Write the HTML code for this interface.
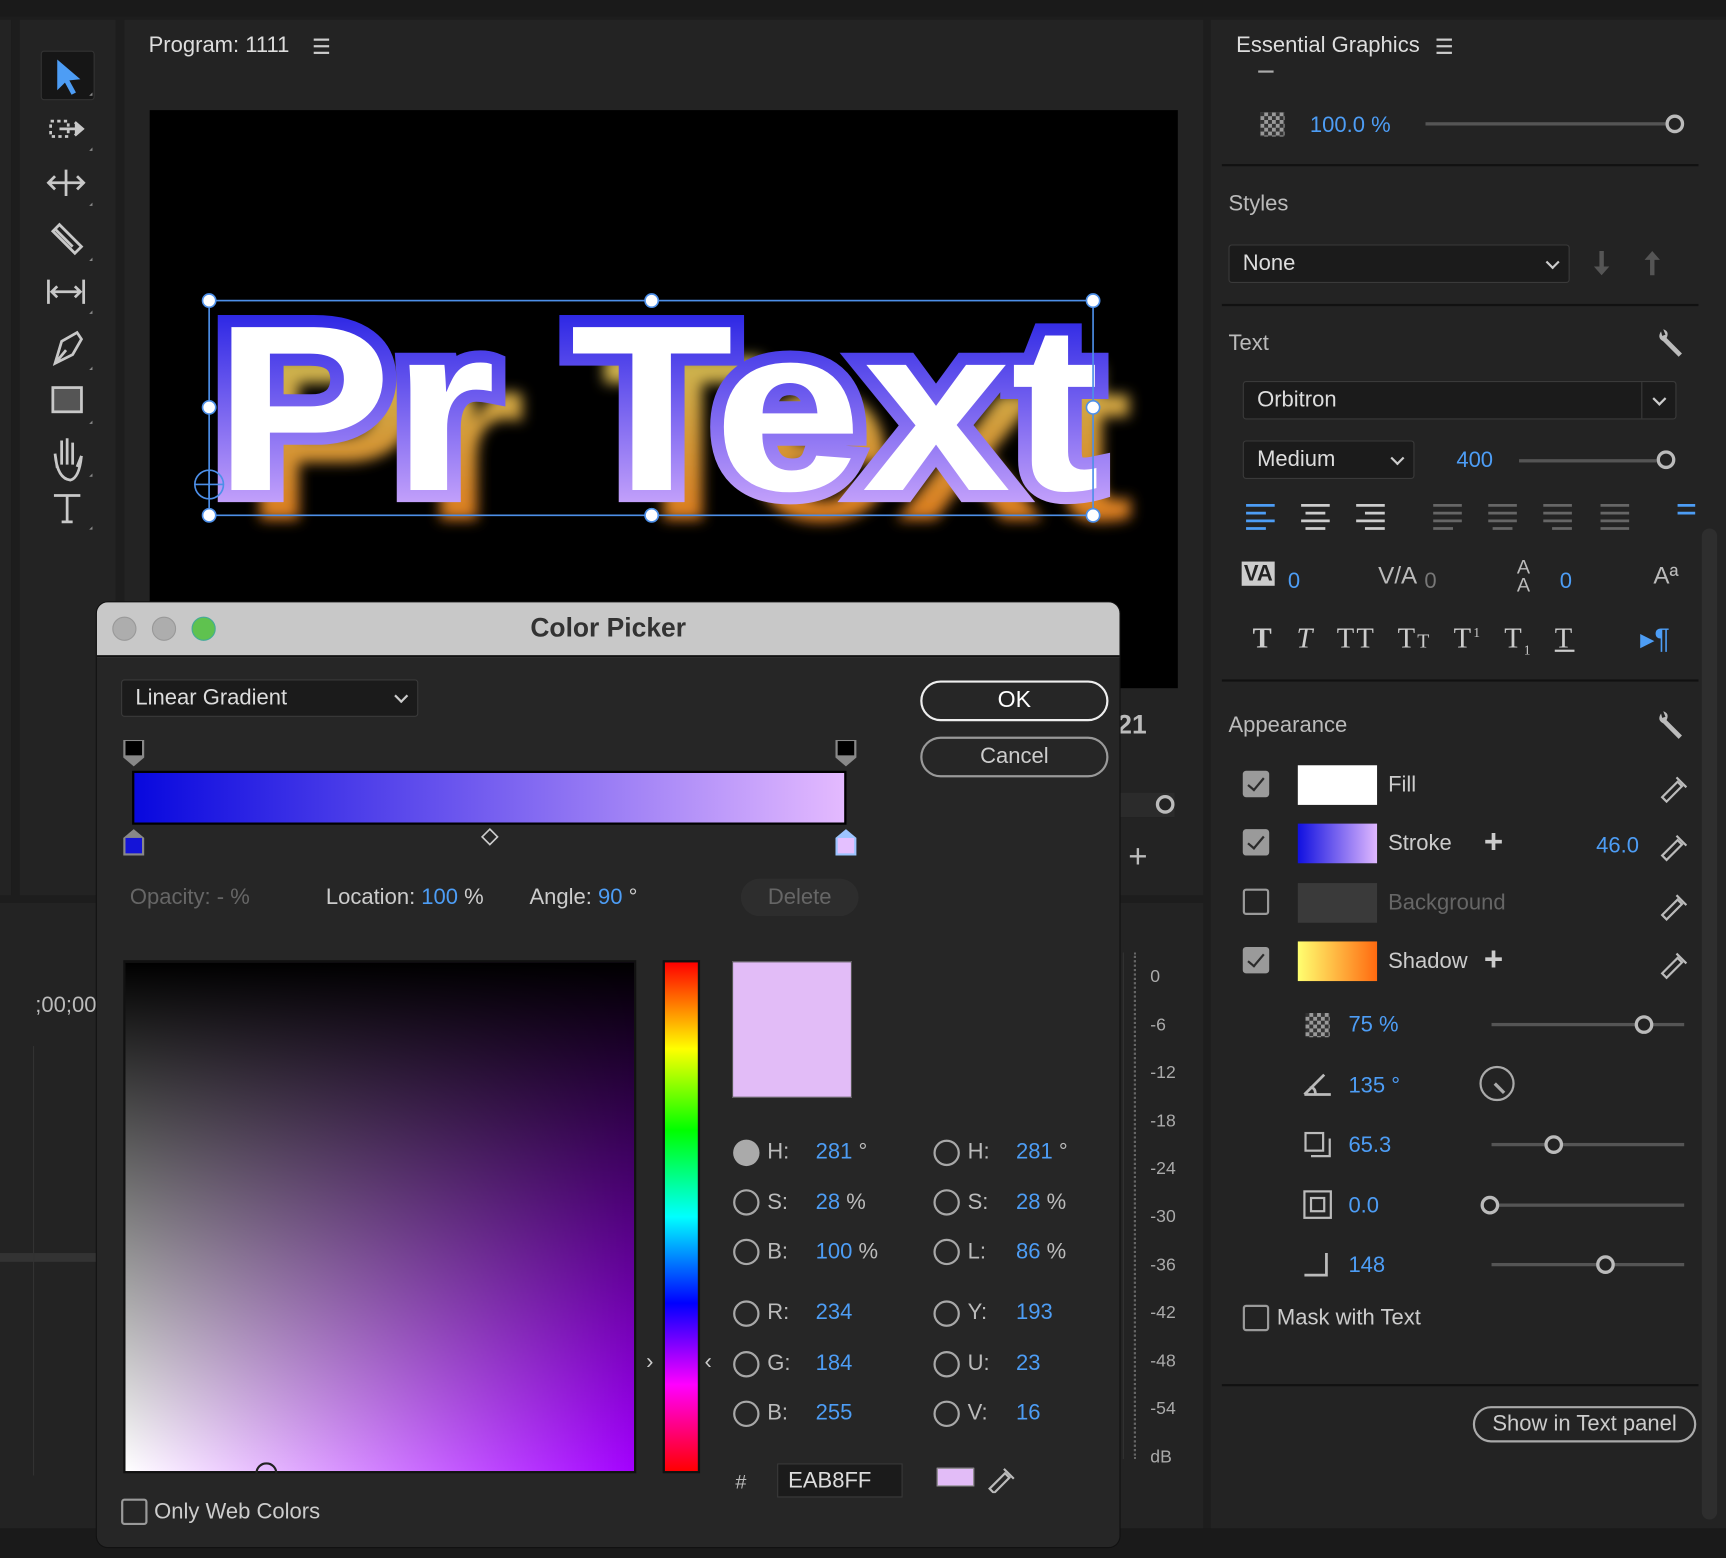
<!DOCTYPE html>
<html><head><meta charset="utf-8"><style>
*{margin:0;padding:0;box-sizing:border-box}
html,body{width:1726px;height:1558px;overflow:hidden;background:#1b1b1b}
#w{position:absolute;left:0;top:0;width:1568px;height:1415px;transform:scale(1.10077,1.1011);transform-origin:0 0;background:#1d1d1d;font-family:"Liberation Sans",sans-serif;color:#c9c9c9;font-size:20px}
.a{position:absolute}
.b{color:#4d9df5}
.sep{position:absolute;height:2px;background:#111;left:1110px;width:433px}
.dd{position:absolute;background:#1b1b1b;border:1px solid #3a3a3a;border-radius:3px;color:#ddd;padding-left:12px;display:flex;align-items:center}
.chev{position:absolute;right:10px;top:50%;width:9px;height:9px;border-right:2px solid #ccc;border-bottom:2px solid #ccc;transform:translateY(-70%) rotate(45deg)}
.cb{position:absolute;width:24px;height:24px;border:2px solid #9a9a9a;border-radius:3px}
.cb.on{background:#9a9a9a}
.cb.on:after{content:"";position:absolute;left:6px;top:1px;width:6px;height:13px;border-right:2.5px solid #2a2a2a;border-bottom:2.5px solid #2a2a2a;transform:rotate(40deg)}
.rad{position:absolute;width:24px;height:24px;border:2.5px solid #a8a8a8;border-radius:50%}
.sl{position:absolute;height:3px;background:#555}
.kn{position:absolute;width:17px;height:17px;border:3px solid #bbb;border-radius:50%;background:#222}
.lab{position:absolute;font-size:20px;color:#bbb}
</style></head><body><div id="w">
<div class="a" style="left:0;top:0;width:1568px;height:15px;background:#1a1a1a"></div>
<div class="a" style="left:18px;top:18px;width:87px;height:795px;background:#232323"></div>
<div class="a" style="left:0;top:18px;width:10px;height:795px;background:#232323"></div>
<div class="a" style="left:37px;top:46px;width:49px;height:45px;background:#161616;border-radius:3px;border:1px solid #333"></div>
<svg class="a" style="left:30px;top:40px" width="70" height="450" viewBox="0 0 70 450">
<path d="M22 14 L22 42 L29 35 L35 46 L39 44 L33 33 L43 32 Z" fill="#4d9df5"/>
<g fill="none" stroke="#c8c8c8" stroke-width="2.5">
<rect x="16" y="70" width="16" height="14" stroke-dasharray="3 3"/><path d="M24 77 H44 M38 71 L45 77 L38 83" fill="#c8c8c8"/>
<path d="M14 126 H46 M30 114 V138 M20 120 L14 126 L20 132 M40 120 L46 126 L40 132"/>
<path d="M20 168 L36 184 M24 164 L44 184 L38 190 L18 170 Z"/>
<path d="M14 214 V236 M46 214 V236 M18 225 H42 M22 220 L17 225 L22 230 M38 220 L43 225 L38 230"/>
<path d="M20 290 L26 270 L40 262 L44 268 L36 282 Z M20 290 L30 278"/>
<rect x="18" y="312" width="26" height="22" fill="#555"/>
<path d="M22 385 L20 372 M26 382 V360 M31 382 V358 M36 382 V362 M40 384 L44 374 M20 372 Q22 395 34 396 Q42 394 44 374"/>
<path d="M19 410 H43 M31 410 V434 M26 434 H36"/>
</g>
<g fill="#888"><path d="M51 47h3v-3zM51 97h3v-3zM51 147h3v-3zM51 197h3v-3zM51 245h3v-3zM51 296h3v-3zM51 345h3v-3zM51 393h3v-3zM51 441h3v-3z"/></g>
</svg>
<div class="a" style="left:113px;top:18px;width:980px;height:795px;background:#232323"></div>
<div class="a" style="left:135px;top:30px;font-size:20px;color:#ddd">Program: 1111</div>
<div class="a" style="left:285px;top:35px;width:14px;height:14px;border-top:2px solid #ccc;border-bottom:2px solid #ccc"><div style="margin-top:4px;height:2px;background:#ccc"></div></div>
<div class="a" style="left:136px;top:100px;width:934px;height:525px;background:#000"></div>
<svg class="a" style="left:136px;top:100px" width="934" height="525" viewBox="0 0 934 525">
<defs>
<linearGradient id="sg" x1="0" y1="0" x2="0" y2="1"><stop offset="0" stop-color="#1010e0"/><stop offset="1" stop-color="#e0b8ff"/></linearGradient>
<linearGradient id="sh" x1="0" y1="0" x2="0" y2="1"><stop offset="0" stop-color="#c8c860"/><stop offset="1" stop-color="#e06a10"/></linearGradient>
<filter id="bl"><feGaussianBlur stdDeviation="6"/></filter>
</defs>
<text x="84" y="372" font-family="Liberation Sans" font-weight="bold" font-size="215" textLength="810" lengthAdjust="spacingAndGlyphs" fill="url(#sh)" filter="url(#bl)">Pr Text</text>
<text x="58" y="345" font-family="Liberation Sans" font-weight="bold" font-size="215" textLength="805" lengthAdjust="spacingAndGlyphs" fill="#fff" stroke="url(#sg)" stroke-width="22" paint-order="stroke" stroke-linejoin="miter">Pr Text</text>
<g stroke="#4d8fe8" stroke-width="1.5" fill="#fff"><rect x="54" y="173" width="803" height="195" fill="none"/>
<circle cx="54" cy="173" r="6"/><circle cx="456" cy="173" r="6"/><circle cx="857" cy="173" r="6"/><circle cx="54" cy="270" r="6"/><circle cx="857" cy="270" r="6"/><circle cx="54" cy="368" r="6"/><circle cx="456" cy="368" r="6"/><circle cx="857" cy="368" r="6"/>
<circle cx="54" cy="340" r="13" fill="none"/><path d="M41 340 H67 M54 327 V353"/></g>
</svg>
<div class="a" style="left:1015px;top:645px;font-size:24px;color:#bbb;font-weight:bold">21</div>
<div class="a" style="left:1017px;top:720px;width:50px;height:22px;background:#2b2b2b"></div>
<div class="kn" style="left:1050px;top:722px"></div>
<div class="a" style="left:1025px;top:762px;font-size:30px;color:#bbb">+</div>
<div class="a" style="left:0;top:820px;width:1093px;height:568px;background:#232323"></div>
<div class="a" style="left:32px;top:902px;font-size:20px;color:#bbb">;00;00</div>
<div class="a" style="left:0;top:1138px;width:88px;height:8px;background:#333"></div>
<div class="a" style="left:30px;top:950px;width:1px;height:390px;background:#333"></div>
<div class="a" style="left:1020px;top:865px;width:12px;height:460px;border-left:1px solid #333;border-right:2px dotted #666"></div>
<div class="a" style="left:1045px;top:866px;font-size:16px;color:#aaa;line-height:43.6px">0<br>-6<br>-12<br>-18<br>-24<br>-30<br>-36<br>-42<br>-48<br>-54<br>dB</div>
<div class="a" style="left:0;top:1388px;width:1568px;height:27px;background:#1a1a1a"></div>
<div class="a" style="left:1100px;top:18px;width:468px;height:1370px;background:#232323"></div>
<div class="a" style="left:1123px;top:30px;font-size:20px;color:#ddd">Essential Graphics</div>
<div class="a" style="left:1305px;top:35px;width:14px;height:14px;border-top:2px solid #ccc;border-bottom:2px solid #ccc"><div style="margin-top:4px;height:2px;background:#ccc"></div></div>
<div class="a" style="left:1143px;top:64px;width:14px;height:2px;background:#aaa"></div>
<div class="a" style="left:1145px;top:102px;width:22px;height:22px;background:repeating-conic-gradient(#999 0 25%,#333 0 50%) 0 0/7px 7px"></div>
<div class="a b" style="left:1190px;top:103px">100.0 %</div>
<div class="sl" style="left:1295px;top:111px;width:218px"></div><div class="kn" style="left:1513px;top:104px"></div>
<div class="sep" style="top:149px"></div>
<div class="lab" style="left:1116px;top:174px">Styles</div>
<div class="dd" style="left:1116px;top:222px;width:310px;height:35px">None<span class="chev"></span></div>
<svg class="a" style="left:1443px;top:226px" width="70" height="28"><g fill="#555"><path d="M10 2h4v14h5l-7 8-7-8h5z"/><path d="M56 24h4V10h5l-7-8-7 8h5z"/></g></svg>
<div class="sep" style="top:276px"></div>
<div class="lab" style="left:1116px;top:301px">Text</div>
<svg class="a" style="left:1503px;top:297px" width="28" height="30"><path d="M6 4 Q2 10 8 13 L22 27 L25 24 L11 10 Q14 4 8 2 L10 7 L7 8 Z" fill="#bbb"/></svg>
<div class="dd" style="left:1129px;top:346px;width:394px;height:35px">Orbitron<span style="position:absolute;right:30px;top:0;bottom:0;border-left:1px solid #3a3a3a"></span><span class="chev"></span></div>
<div class="dd" style="left:1129px;top:400px;width:156px;height:35px">Medium<span class="chev"></span></div>
<div class="a b" style="left:1323px;top:407px">400</div>
<div class="sl" style="left:1380px;top:417px;width:125px"></div><div class="kn" style="left:1505px;top:409px"></div>
<svg class="a" style="left:1128px;top:455px" width="440" height="32"><g stroke-width="2.5">
<g stroke="#4d9df5"><path d="M4 4h26M4 11h18M4 18h26M4 25h18"/></g>
<g stroke="#ccc"><path d="M54 4h26M58 11h18M54 18h26M58 25h18M104 4h26M112 11h18M104 18h26M112 25h18"/></g>
<g stroke="#666"><path d="M174 4h26M174 11h26M174 18h26M174 25h18M224 4h26M224 11h26M224 18h26M228 25h18M274 4h26M274 11h26M274 18h26M282 25h18M326 4h26M326 11h26M326 18h26M326 25h26"/></g>
<path d="M396 4h16M396 11h16" stroke="#4d9df5"/></g></svg>
<div class="a" style="left:1128px;top:510px;font-size:20px;font-weight:bold;color:#222;background:#ccc;padding:0 2px;line-height:22px">VA</div>
<div class="a b" style="left:1170px;top:517px">0</div>
<div class="a" style="left:1252px;top:510px;font-size:22px;color:#bbb">V/A</div>
<div class="a" style="left:1294px;top:517px;color:#777">0</div>
<div class="a" style="left:1378px;top:507px;font-size:18px;color:#bbb;line-height:16px">A<br>A</div>
<div class="a b" style="left:1417px;top:517px">0</div>
<div class="a" style="left:1502px;top:510px;font-size:22px;color:#bbb">Aª</div>
<div class="a" style="left:1138px;top:565px;font-size:26px;color:#ccc;font-family:'Liberation Serif',serif;letter-spacing:2px;word-spacing:12px"><b>T</b> <i>T</i> TT T<span style="font-size:18px">T</span> T<sup style="font-size:12px">1</sup> T<sub style="font-size:12px">1</sub> <u>T</u></div>
<div class="a b" style="left:1490px;top:565px;font-size:26px">▸¶</div>
<div class="sep" style="top:617px"></div>
<div class="lab" style="left:1116px;top:648px">Appearance</div>
<svg class="a" style="left:1503px;top:644px" width="28" height="30"><path d="M6 4 Q2 10 8 13 L22 27 L25 24 L11 10 Q14 4 8 2 L10 7 L7 8 Z" fill="#bbb"/></svg>
<div class="cb on" style="left:1129px;top:700px"></div>
<div class="a" style="left:1179px;top:695px;width:72px;height:36px;background:#fff"></div>
<div class="lab" style="left:1261px;top:702px;color:#ccc">Fill</div>
<div class="cb on" style="left:1129px;top:753px"></div>
<div class="a" style="left:1179px;top:748px;width:72px;height:36px;background:linear-gradient(90deg,#1010e0,#e0b8ff)"></div>
<div class="lab" style="left:1261px;top:755px;color:#ccc">Stroke</div>
<div class="a" style="left:1348px;top:748px;font-size:30px;color:#ccc;font-weight:bold">+</div>
<div class="a b" style="left:1450px;top:757px">46.0</div>
<div class="cb" style="left:1129px;top:807px"></div>
<div class="a" style="left:1179px;top:802px;width:72px;height:36px;background:#3a3a3a"></div>
<div class="lab" style="left:1261px;top:809px;color:#666">Background</div>
<div class="cb on" style="left:1129px;top:860px"></div>
<div class="a" style="left:1179px;top:855px;width:72px;height:36px;background:linear-gradient(90deg,#ffff70,#ff6a10)"></div>
<div class="lab" style="left:1261px;top:862px;color:#ccc">Shadow</div>
<div class="a" style="left:1348px;top:855px;font-size:30px;color:#ccc;font-weight:bold">+</div>
<svg class="a" style="left:1506px;top:698px" width="30" height="200"><g fill="none" stroke="#bbb" stroke-width="2"><path d="M4 26 L18 12 L22 16 L8 30 Z M17 8 L26 17"/><path d="M4 79 L18 65 L22 69 L8 83 Z M17 61 L26 70"/><path d="M4 133 L18 119 L22 123 L8 137 Z M17 115 L26 124"/><path d="M4 186 L18 172 L22 176 L8 190 Z M17 168 L26 177"/></g></svg>
<div class="a" style="left:1186px;top:920px;width:22px;height:22px;background:repeating-conic-gradient(#999 0 25%,#333 0 50%) 0 0/7px 7px"></div>
<div class="a b" style="left:1225px;top:920px">75 %</div>
<div class="sl" style="left:1355px;top:929px;width:175px"></div><div class="kn" style="left:1485px;top:922px"></div>
<svg class="a" style="left:1183px;top:972px" width="30" height="26"><path d="M2 22 H26 M2 22 L20 4 M12 22 Q12 15 7 16" fill="none" stroke="#bbb" stroke-width="2.5"/></svg>
<div class="a b" style="left:1225px;top:975px">135 °</div>
<div class="a" style="left:1344px;top:968px;width:32px;height:32px;border:2.5px solid #aaa;border-radius:50%"><div style="position:absolute;left:13px;top:13px;width:12px;height:2.5px;background:#aaa;transform:rotate(45deg);transform-origin:0 0"></div></div>
<svg class="a" style="left:1183px;top:1026px" width="30" height="28"><g fill="none" stroke="#bbb" stroke-width="2"><rect x="3" y="3" width="16" height="16"/><path d="M8 24 H25 V8"/></g></svg>
<div class="a b" style="left:1225px;top:1029px">65.3</div>
<div class="sl" style="left:1355px;top:1038px;width:175px"></div><div class="kn" style="left:1403px;top:1031px"></div>
<svg class="a" style="left:1183px;top:1080px" width="30" height="30"><g fill="none" stroke="#bbb" stroke-width="2"><rect x="2" y="2" width="24" height="24"/><rect x="8" y="8" width="12" height="12"/></g></svg>
<div class="a b" style="left:1225px;top:1084px">0.0</div>
<div class="sl" style="left:1355px;top:1093px;width:175px"></div><div class="kn" style="left:1345px;top:1086px"></div>
<svg class="a" style="left:1183px;top:1136px" width="30" height="28"><path d="M2 22 H22 V2" fill="none" stroke="#bbb" stroke-width="2.5"/></svg>
<div class="a b" style="left:1225px;top:1138px">148</div>
<div class="sl" style="left:1355px;top:1147px;width:175px"></div><div class="kn" style="left:1450px;top:1140px"></div>
<div class="cb" style="left:1129px;top:1185px"></div>
<div class="lab" style="left:1160px;top:1186px;color:#ccc">Mask with Text</div>
<div class="sep" style="top:1257px"></div>
<div class="a" style="left:1338px;top:1277px;width:203px;height:33px;border:2px solid #aaa;border-radius:17px;color:#ccc;text-align:center;line-height:29px">Show in Text panel</div>
<div class="a" style="left:1546px;top:480px;width:14px;height:900px;background:#2e2e2e;border-radius:7px"></div>
<div class="a" style="left:88px;top:547px;width:929px;height:858px;background:#262626;border-radius:10px;overflow:hidden;box-shadow:0 0 0 1px #111">
<div class="a" style="left:0;top:0;width:929px;height:50px;background:#c8c8c8;border-bottom:2px solid #111"></div>
<div class="a" style="left:14px;top:13px;width:22px;height:22px;border-radius:50%;background:#adadad;border:1px solid #999"></div>
<div class="a" style="left:50px;top:13px;width:22px;height:22px;border-radius:50%;background:#adadad;border:1px solid #999"></div>
<div class="a" style="left:86px;top:13px;width:22px;height:22px;border-radius:50%;background:#5fc24f;border:1px solid #4a9"></div>
<div class="a" style="left:0;top:10px;width:929px;text-align:center;font-size:24px;font-weight:bold;color:#333;padding-left:0">Color Picker</div>
</div>
<div class="dd" style="left:110px;top:617px;width:270px;height:34px">Linear Gradient<span class="chev"></span></div>
<div class="a" style="left:836px;top:618px;width:171px;height:37px;border:2.5px solid #eee;border-radius:19px;color:#fff;text-align:center;line-height:32px;font-size:21px">OK</div>
<div class="a" style="left:836px;top:669px;width:171px;height:37px;border:2px solid #999;border-radius:19px;color:#ccc;text-align:center;line-height:33px">Cancel</div>
<svg class="a" style="left:105px;top:665px" width="690" height="120"><g>
<path d="M7 7 h19 v16 l-9.5 8 -9.5 -8z" fill="#888"/><rect x="9" y="8" width="15" height="13" fill="#000"/>
<path d="M654 7 h19 v16 l-9.5 8 -9.5 -8z" fill="#888"/><rect x="656" y="8" width="15" height="13" fill="#000"/>
<path d="M7 112 h19 v-16 l-9.5 -8 -9.5 8z" fill="#888"/><rect x="9" y="96" width="15" height="14" fill="#1414d8"/>
<path d="M654 112 h19 v-16 l-9.5 -8 -9.5 8z" fill="#9cc4ff"/><rect x="656" y="96" width="15" height="14" fill="#e4c0ff"/>
<path d="M340 88 l7 7 -7 7 -7 -7z" fill="none" stroke="#ccc" stroke-width="1.5"/></g></svg>
<div class="a" style="left:120px;top:700px;width:649px;height:49px;background:linear-gradient(90deg,#0808de,#6a55ee 45%,#e4baff);border:2px solid #000"></div>
<div class="a" style="left:118px;top:804px;color:#666">Opacity: - %</div>
<div class="a" style="left:296px;top:804px;color:#ccc">Location: <span class="b">100</span> %</div>
<div class="a" style="left:481px;top:804px;color:#ccc">Angle: <span class="b">90</span> °</div>
<div class="a" style="left:673px;top:798px;width:107px;height:34px;background:#2d2d2d;border-radius:17px;color:#666;text-align:center;line-height:34px">Delete</div>
<div class="a" style="left:112px;top:872px;width:466px;height:466px;background:linear-gradient(to bottom,#000,rgba(0,0,0,0)),linear-gradient(90deg,#fff,#a300ff);border:2px solid #111"></div>
<div class="a" style="left:232px;top:1328px;width:20px;height:20px;border:2px solid #222;border-radius:50%;clip-path:inset(0 0 50% 0)"></div>
<div class="a" style="left:602px;top:872px;width:34px;height:466px;background:linear-gradient(to bottom,#f00,#ff0 17%,#0f0 33%,#0ff 50%,#00f 67%,#f0f 83%,#f00);border:2px solid #111"></div>
<div class="a" style="left:587px;top:1226px;color:#ccc">›</div><div class="a" style="left:640px;top:1226px;color:#ccc">‹</div>
<div class="a" style="left:665px;top:873px;width:109px;height:124px;background:#e2bcf7;border:1px solid #555"></div>
<div class="a" style="left:666px;top:1035px;width:24px;height:24px;border-radius:50%;background:#aaa"></div>
<div class="rad" style="left:666px;top:1080px"></div><div class="rad" style="left:666px;top:1125px"></div><div class="rad" style="left:666px;top:1181px"></div><div class="rad" style="left:666px;top:1227px"></div><div class="rad" style="left:666px;top:1272px"></div>
<div class="rad" style="left:848px;top:1035px"></div><div class="rad" style="left:848px;top:1080px"></div><div class="rad" style="left:848px;top:1125px"></div><div class="rad" style="left:848px;top:1181px"></div><div class="rad" style="left:848px;top:1227px"></div><div class="rad" style="left:848px;top:1272px"></div>
<div class="a" style="left:697px;top:1024px;line-height:45.5px;color:#bbb">H:<br>S:<br>B:</div>
<div class="a b" style="left:741px;top:1024px;line-height:45.5px">281 <span style="color:#bbb">°</span><br>28 <span style="color:#bbb">%</span><br>100 <span style="color:#bbb">%</span></div>
<div class="a" style="left:879px;top:1024px;line-height:45.5px;color:#bbb">H:<br>S:<br>L:</div>
<div class="a b" style="left:923px;top:1024px;line-height:45.5px">281 <span style="color:#bbb">°</span><br>28 <span style="color:#bbb">%</span><br>86 <span style="color:#bbb">%</span></div>
<div class="a" style="left:697px;top:1170px;line-height:45.5px;color:#bbb">R:<br>G:<br>B:</div>
<div class="a b" style="left:741px;top:1170px;line-height:45.5px">234<br>184<br>255</div>
<div class="a" style="left:879px;top:1170px;line-height:45.5px;color:#bbb">Y:<br>U:<br>V:</div>
<div class="a b" style="left:923px;top:1170px;line-height:45.5px">193<br>23<br>16</div>
<div class="a" style="left:668px;top:1336px;color:#bbb;font-size:18px">#</div>
<div class="a" style="left:706px;top:1329px;width:114px;height:31px;background:#1b1b1b;border:1px solid #3a3a3a;color:#ddd;padding-left:9px;line-height:31px">EAB8FF</div>
<div class="a" style="left:851px;top:1333px;width:34px;height:17px;background:#e2bcf7;border:1px solid #888"></div>
<svg class="a" style="left:895px;top:1328px" width="28" height="28"><path d="M4 24 L18 10 L22 14 L8 28 Z M17 6 L26 15" fill="none" stroke="#bbb" stroke-width="2"/></svg>
<div class="cb" style="left:110px;top:1361px"></div>
<div class="a" style="left:140px;top:1362px;color:#ccc">Only Web Colors</div>
</div></body></html>
